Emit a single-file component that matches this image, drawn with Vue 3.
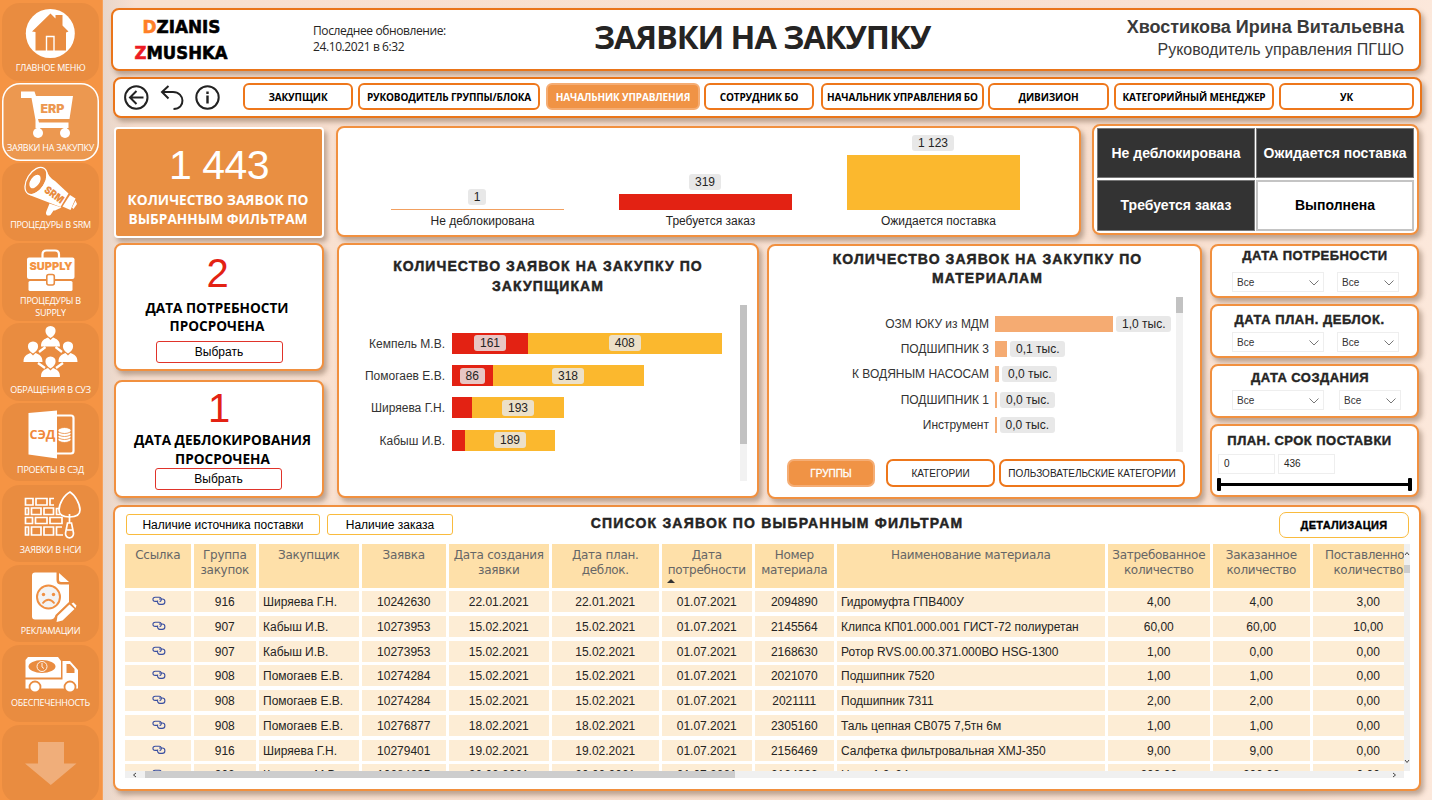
<script setup>
const menu = [
  { id: 'home', label: ['ГЛАВНОЕ МЕНЮ'], top: 3, h: 78, ly: 62 },
  { id: 'erp', label: ['ЗАЯВКИ НА ЗАКУПКУ'], top: 83, h: 78, ly: 142, active: true },
  { id: 'srm', label: ['ПРОЦЕДУРЫ В SRM'], top: 163, h: 78, ly: 219 },
  { id: 'supply', label: ['ПРОЦЕДУРЫ В', 'SUPPLY'], top: 243, h: 78, ly: 295 },
  { id: 'people', label: ['ОБРАЩЕНИЯ В СУЗ'], top: 323, h: 78, ly: 384 },
  { id: 'sed', label: ['ПРОЕКТЫ В СЭД'], top: 403, h: 78, ly: 464 },
  { id: 'nsi', label: ['ЗАЯВКИ В НСИ'], top: 485, h: 77, ly: 544 },
  { id: 'claims', label: ['РЕКЛАМАЦИИ'], top: 565, h: 77, ly: 625 },
  { id: 'truck', label: ['ОБЕСПЕЧЕННОСТЬ'], top: 645, h: 77, ly: 697 },
  { id: 'down', label: [], top: 725, h: 78, ly: 800 },
]

const tabs = [
  { t: 'ЗАКУПЩИК', w: 110, g: 0 },
  { t: 'РУКОВОДИТЕЛЬ ГРУППЫ/БЛОКА', w: 182, g: 5 },
  { t: 'НАЧАЛЬНИК УПРАВЛЕНИЯ', w: 154, g: 6, on: true },
  { t: 'СОТРУДНИК БО', w: 110, g: 4 },
  { t: 'НАЧАЛЬНИК УПРАВЛЕНИЯ БО', w: 163, g: 7 },
  { t: 'ДИВИЗИОН', w: 121, g: 4 },
  { t: 'КАТЕГОРИЙНЫЙ МЕНЕДЖЕР', w: 160, g: 5 },
  { t: 'УК', w: 135, g: 5 },
]

const statuses = [
  { t: 'Не деблокирована', v: '1', h: 1, c: '#f2a060' },
  { t: 'Требуется заказ', v: '319', h: 16, c: '#e32213' },
  { t: 'Ожидается поставка', v: '1 123', h: 55, c: '#fbb82e' },
]

const buyers = [
  { n: 'Кемпель М.В.', r: 76, y: 193.5, rv: '161', yv: '408' },
  { n: 'Помогаев Е.В.', r: 40.5, y: 151, rv: '86', yv: '318' },
  { n: 'Ширяева Г.Н.', r: 20, y: 92, rv: '', yv: '193' },
  { n: 'Кабыш И.В.', r: 13, y: 90, rv: '', yv: '189' },
]

const materials = [
  { n: 'ОЗМ ЮКУ из МДМ', w: 118, v: '1,0 тыс.' },
  { n: 'ПОДШИПНИК 3', w: 12, v: '0,1 тыс.' },
  { n: 'К ВОДЯНЫМ НАСОСАМ', w: 4, v: '0,0 тыс.' },
  { n: 'ПОДШИПНИК 1', w: 2, v: '0,0 тыс.' },
  { n: 'Инструмент', w: 1.5, v: '0,0 тыс.' },
]

const filters = [
  { t: 'ДАТА ПОТРЕБНОСТИ', cls: 'f1' },
  { t: 'ДАТА ПЛАН. ДЕБЛОК.', cls: 'f2' },
  { t: 'ДАТА СОЗДАНИЯ', cls: 'f3' },
]

const heads = ['Ссылка', 'Группа закупок', 'Закупщик', 'Заявка', 'Дата создания заявки', 'Дата план. деблок.', 'Дата потребности', 'Номер материала', 'Наименование материала', 'Затребованное количество', 'Заказанное количество', 'Поставленное количество']

const rows = [
  ['', '916', 'Ширяева Г.Н.', '10242630', '22.01.2021', '22.01.2021', '01.07.2021', '2094890', 'Гидромуфта ГПВ400У', '4,00', '4,00', '3,00'],
  ['', '907', 'Кабыш И.В.', '10273953', '15.02.2021', '15.02.2021', '01.07.2021', '2145564', 'Клипса КП01.000.001 ГИСТ-72 полиуретан', '60,00', '60,00', '10,00'],
  ['', '907', 'Кабыш И.В.', '10273953', '15.02.2021', '15.02.2021', '01.07.2021', '2168630', 'Ротор RVS.00.00.371.000ВО HSG-1300', '1,00', '0,00', '0,00'],
  ['', '908', 'Помогаев Е.В.', '10274284', '15.02.2021', '15.02.2021', '01.07.2021', '2021070', 'Подшипник 7520', '1,00', '1,00', '0,00'],
  ['', '908', 'Помогаев Е.В.', '10274284', '15.02.2021', '15.02.2021', '01.07.2021', '2021111', 'Подшипник 7311', '2,00', '2,00', '0,00'],
  ['', '908', 'Помогаев Е.В.', '10276877', '18.02.2021', '18.02.2021', '01.07.2021', '2305160', 'Таль цепная СВ075 7,5тн 6м', '1,00', '1,00', '0,00'],
  ['', '916', 'Ширяева Г.Н.', '10279401', '19.02.2021', '19.02.2021', '01.07.2021', '2156469', 'Салфетка фильтровальная XMJ-350', '9,00', '9,00', '0,00'],
  ['', '902', 'Кемпель М.В.', '10284895', '20.02.2021', '20.02.2021', '01.07.2021', '2124922', 'Цепь 1,2x24', '200,00', '200,00', '0,00'],
]
</script>

<template>
  <div class="app">
    <aside class="side">
      <div v-for="m in menu" :key="m.id" class="tile" :class="{ active: m.active }" :style="{ height: m.h + 'px', marginBottom: (m.id === 'sed' ? 4 : m.id === 'nsi' || m.id === 'claims' || m.id === 'truck' ? 3 : 2) + 'px' }">
        <svg width="97" :height="m.ly - m.top" :viewBox="`2 ${m.top} 97 ${m.ly - m.top}`">
          <g v-if="m.id === 'home'">
            <circle cx="50.3" cy="33.5" r="24.5" fill="#fff" />
            <path d="M32 31.500L50.500 13.500L55.500 18.500V15H62.500V25.500L68.500 31.500L66 32.500V50.500H35.500V32Z" fill="#e98c40" />
            <path d="M46.500 51V36.500H54V51" fill="none" stroke="#fff" stroke-width="1.400" />
          </g>
          <g v-else-if="m.id === 'erp'" fill="#fff">
            <path d="M21 91.500H34.500L36 96H73L69.500 119H38L39 122.500H68.500V128H35.500V120L31.500 98H21Z" />
            <rect x="37" y="128" width="3" height="3" /><rect x="64" y="128" width="3" height="3" />
            <circle cx="38" cy="133" r="5" /><circle cx="65" cy="133" r="5" />
            <text x="40.500" y="113" font-size="11.500" class="ic" textLength="24" lengthAdjust="spacingAndGlyphs" fill="#ec9850">ERP</text>
          </g>
          <g v-else-if="m.id === 'srm'" fill="#fff">
            <ellipse cx="36" cy="181" rx="9" ry="15" transform="rotate(32 36 181)" fill="none" stroke="#fff" stroke-width="1.300" />
            <ellipse cx="35" cy="181.500" rx="4.500" ry="7.500" transform="rotate(35 35 181.500)" />
            <path d="M46.500 169.500Q48 177 55 181L68.500 193.500L60.500 207L28 194.500Q40 194 46 180Z" />
            <path d="M70 195L75.500 198.500L70.500 210L62.500 206.500Z" />
            <path d="M75.500 200.500L77 204L73.500 209L72 207.500Z" />
            <path d="M49.500 203.500L61.500 207.500L55 210.500H53.500L50.500 215C47 216.500 45 214.500 46.500 211Z" />
            <text x="43.500" y="191.500" font-size="10.500" class="ic" textLength="21" lengthAdjust="spacingAndGlyphs" transform="rotate(36 43.500 191.500)" fill="#e98c40">SRM</text>
          </g>
          <g v-else-if="m.id === 'supply'" fill="#fff">
            <path d="M42.500 258V254.500Q42.500 250.500 46.500 250.500H55Q59 250.500 59 254.500V258" fill="none" stroke="#fff" stroke-width="2.200" />
            <rect x="27" y="257.500" width="47.500" height="21.500" rx="2" />
            <rect x="28.500" y="281" width="44" height="10" rx="1.500" />
            <rect x="46.800" y="274.500" width="7.500" height="10.500" rx="2" stroke="#e98c40" stroke-width="1.600" />
            <text x="29.500" y="270" font-size="10.500" class="ic" textLength="43" lengthAdjust="spacingAndGlyphs" fill="#f39444">SUPPLY</text>
          </g>
          <g v-else-if="m.id === 'people'" fill="#fff">
            <path d="M45.500 347L39 352M55.500 347L62 352M38 363L45 368M63 363L56 368" stroke="#fff" stroke-width="2.300" />
            <g v-for="p in [[50.500, 327], [33, 342.500], [68, 342.500], [50.500, 357.500]]" :key="p.join()" :transform="`translate(${p[0]} ${p[1]})`">
              <path d="M0 -1C7 -1 6.500 8 0 11C-6.500 8 -7 -1 0 -1Z" />
              <path d="M-9.500 19.500C-9.500 13 -6 12 -2.500 10.500L0 13L2.500 10.500C6 12 9.500 13 9.500 19.500Z" />
            </g>
          </g>
          <g v-else-if="m.id === 'sed'" fill="#fff">
            <path d="M57 415.500H71Q73.500 415.500 73.500 418V451Q73.500 453.500 71 453.500H57" fill="none" stroke="#fff" stroke-width="2.200" />
            <path d="M28.500 413L57 410.500V458.500L28.500 454.500Z" />
            <g stroke="#e98c40" stroke-width=".8">
              <ellipse cx="64.500" cy="439.500" rx="6.500" ry="3" /><ellipse cx="64.500" cy="436.500" rx="6.500" ry="3" /><ellipse cx="64.500" cy="433.500" rx="6.500" ry="3" /><ellipse cx="64.500" cy="430.500" rx="6.500" ry="3" />
            </g>
            <text x="29.500" y="438.500" font-size="12" class="sedt" textLength="26" lengthAdjust="spacingAndGlyphs" fill="#f0883a">СЭД</text>
          </g>
          <g v-else-if="m.id === 'nsi'" fill="none" stroke="#fff" stroke-width="1.700">
            <path d="M25.500 498.500H33V505H25.500ZM36 498.500H47V505H36ZM54 505H50V498.500H54M25.500 508H28.500V514.500H25.500ZM31.500 508H41V514.500H31.500ZM44 508H53.500V514.500H44ZM59 508.500H56.500V514.500H60M25.500 517.500H32.500V523.500H25.500ZM35.500 517.500H47V523.500H35.500ZM50 517.500H62V523.500H50ZM25.500 527H28.500V535H25.500ZM31.500 527H41V535H31.500ZM44 527H53.500V535H44ZM62 527H56.500V535H63" />
            <path d="M70 492C75 495 80 504 80 510C80 515 76 517 69.500 517C63 517 59 515 59 510C59 504 64 495 70 492Z" />
            <path d="M69.500 514V523M67.500 523H71.500L73.500 533C74 539.500 65 539.500 65.500 533ZM67 530H72" />
          </g>
          <g v-else-if="m.id === 'claims'" fill="#fff">
            <path d="M35 572.500H56.500V580Q56.500 584.500 61 584.500H69V602L55.500 615Q54.500 619.500 50 619.500H35Q32 619.500 32 616.500V575.500Q32 572.500 35 572.500Z" />
            <path d="M59 573L69 582H61Q59 582 59 580Z" />
            <circle cx="48.500" cy="597" r="11.500" fill="#f3f3f3" stroke="#f09043" stroke-width="2" />
            <path d="M42.500 603.500Q48.500 596 54.500 603.500" fill="none" stroke="#f09043" stroke-width="1.800" />
            <circle cx="43.500" cy="594.500" r="1.700" fill="#f09043" /><circle cx="53.500" cy="594.500" r="1.700" fill="#f09043" />
            <path d="M57.500 616L69.500 604.500L74.500 609L62.500 620.500L56.500 622ZM71.500 603.500L73.500 602.500L76.500 605.500L75.500 608Z" />
          </g>
          <g v-else-if="m.id === 'truck'" fill="#fff">
            <path d="M28 657H58L61 661V677.500H25.500V660Z" />
            <ellipse cx="42" cy="666.500" rx="13.500" ry="6.500" fill="#e98c40" />
            <circle cx="42" cy="666.500" r="5" fill="none" stroke="#fff" stroke-width=".9" />
            <path d="M42 663V667L44 668.500" fill="none" stroke="#fff" stroke-width=".9" />
            <path d="M62.500 661H70L78 670V688.500H25.500V679.500H62.500Z" />
            <path d="M66.500 664H70L74.500 669V673H66.500Z" fill="#e98c40" />
            <circle cx="35" cy="687" r="5.500" stroke="#e98c40" stroke-width="1.800" /><circle cx="70" cy="687" r="5.500" stroke="#e98c40" stroke-width="1.800" />
          </g>
          <path v-else d="M38 742H64V763.500H76.500L50.800 785L25 763.500H38Z" fill="#f0ae7a" />
        </svg>
        <div class="tlabel"><div v-for="l in m.label" :key="l">{{ l }}</div></div>
      </div>
    </aside>

    <main class="main">
      <header class="panel strong head">
        <svg class="logo" width="100" height="52" viewBox="0 0 100 52">
          <text x="10.500" y="17.500" textLength="78" lengthAdjust="spacingAndGlyphs" stroke="#000"><tspan fill="#ff7f27" stroke="#ff7f27">D</tspan>ZIANIS</text>
          <text x="2.500" y="43.500" textLength="93" lengthAdjust="spacingAndGlyphs" stroke="#000"><tspan fill="#ed1c24" stroke="#ed1c24">Z</tspan>MUSHKA</text>
        </svg>
        <div class="upd">Последнее обновление:<br />24.10.2021 в 6:32</div>
        <h1>ЗАЯВКИ НА ЗАКУПКУ</h1>
        <div class="user"><b>Хвостикова Ирина Витальевна</b><span>Руководитель управления ПГШО</span></div>
      </header>

      <nav class="panel strong nav">
        <svg class="navic" width="100" height="28" viewBox="122 83 100 28" fill="none" stroke="#222" stroke-width="2">
          <circle cx="136.300" cy="97.500" r="11.200" />
          <path d="M143.500 97.500H130M136.500 91L130 97.500L136.500 104" />
          <path d="M168.500 86L162 92L168.500 98.500M162 92H173C185 92 186 109 173.500 109" />
          <circle cx="207.500" cy="97.500" r="11.200" />
          <path d="M207.500 95.500V103.500M207.500 91.500V94" stroke-width="2.400" />
        </svg>
        <button v-for="b in tabs" :key="b.t" class="tab" :class="{ on: b.on }" :style="{ width: b.w + 'px', marginLeft: b.g + 'px' }">{{ b.t }}</button>
      </nav>

      <section class="row1">
        <div class="kpi"><div class="num">1 443</div><div class="cap">КОЛИЧЕСТВО ЗАЯВОК ПО<br />ВЫБРАННЫМ ФИЛЬТРАМ</div></div>
        <div class="panel status">
          <div v-for="s in statuses" :key="s.t" class="scol">
            <span class="pill">{{ s.v }}</span>
            <div class="sbar" :style="{ height: s.h + 'px', background: s.c }"></div>
            <div class="scat">{{ s.t }}</div>
          </div>
        </div>
        <div class="panel slicer">
          <div>Не деблокирована</div><div>Ожидается поставка</div><div>Требуется заказ</div><div class="white">Выполнена</div>
        </div>
      </section>

      <section class="row2">
        <div class="left">
          <div class="panel late l1"><div class="num">2</div><div class="cap">ДАТА ПОТРЕБНОСТИ<br />ПРОСРОЧЕНА</div><button>Выбрать</button></div>
          <div class="panel late l2"><div class="num">1</div><div class="cap">ДАТА ДЕБЛОКИРОВАНИЯ<br />ПРОСРОЧЕНА</div><button>Выбрать</button></div>
        </div>

        <div class="panel buyers">
          <h2>КОЛИЧЕСТВО ЗАЯВОК НА ЗАКУПКУ ПО<br />ЗАКУПЩИКАМ</h2>
          <div class="bbody">
            <div class="bars">
              <div v-for="b in buyers" :key="b.n" class="brow">
                <span class="bn">{{ b.n }}</span>
                <div class="seg red" :style="{ width: b.r + 'px' }"><i v-if="b.rv">{{ b.rv }}</i></div>
                <div class="seg yel" :style="{ width: b.y + 'px' }"><i>{{ b.yv }}</i></div>
              </div>
            </div>
            <div class="track"><div class="thumb"></div></div>
          </div>
        </div>

        <div class="panel mats">
          <h2>КОЛИЧЕСТВО ЗАЯВОК НА ЗАКУПКУ ПО<br />МАТЕРИАЛАМ</h2>
          <div class="mbody">
            <div class="bars">
              <div v-for="b in materials" :key="b.n" class="mrow">
                <span class="mn">{{ b.n }}</span>
                <div class="mbar" :style="{ width: b.w + 'px' }"></div>
                <span class="pill">{{ b.v }}</span>
              </div>
            </div>
            <div class="track"><div class="thumb"></div></div>
          </div>
          <div class="mbtns"><button class="on">ГРУППЫ</button><button>КАТЕГОРИИ</button><button>ПОЛЬЗОВАТЕЛЬСКИЕ КАТЕГОРИИ</button></div>
        </div>

        <div class="right">
          <div v-for="f in filters" :key="f.t" class="panel flt" :class="f.cls">
            <h3>{{ f.t }}</h3>
            <div class="sels">
              <div class="sel"><span>Все</span><svg width="10" height="6" viewBox="0 0 10 6"><path d="M.5 .5L5 5L9.500 .5" fill="none" stroke="#777" /></svg></div>
              <div class="sel sm"><span>Все</span><svg width="10" height="6" viewBox="0 0 10 6"><path d="M.5 .5L5 5L9.500 .5" fill="none" stroke="#777" /></svg></div>
            </div>
          </div>
          <div class="panel flt term">
            <h3>ПЛАН. СРОК ПОСТАВКИ</h3>
            <div class="ins"><span>0</span><span>436</span></div>
            <div class="slider"><b></b><i></i><b></b></div>
          </div>
        </div>
      </section>

      <section class="panel list">
        <div class="ltop">
          <button class="lb b1">Наличие источника поставки</button><button class="lb b2">Наличие заказа</button>
          <h2>СПИСОК ЗАЯВОК ПО ВЫБРАННЫМ ФИЛЬТРАМ</h2>
          <button class="det">ДЕТАЛИЗАЦИЯ</button>
        </div>
        <div class="twrap">
          <div class="grid">
            <div class="tr th">
              <div v-for="(h, i) in heads" :key="h"><span>{{ h }}</span><em v-if="i === 6"></em></div>
            </div>
            <div v-for="(r, k) in rows" :key="k" class="tr td">
              <div v-for="(c, i) in r" :key="i" :class="{ lt: i === 2 || i === 8 }">
                <svg v-if="i === 0" width="14" height="10" viewBox="0 0 14 10" fill="none" stroke="#3a4fa0" stroke-width="1.100"><path d="M5 5.400H3.200A2.100 1.900 0 0 1 3.200 1.300H6.500A2.300 2.200 0 0 1 7.600 5.600" /><path d="M7 3H10.200A2.700 2.700 0 0 1 10.200 8.400H8A2.600 2.600 0 0 1 5.800 4.600" /></svg>
                <template v-else>{{ c }}</template>
              </div>
            </div>
          </div>
          <div class="vs"><svg width="6" height="5" viewBox="0 0 6 5"><path d="M1 4L3 1.500L5 4" fill="none" stroke="#444" /></svg><div></div><svg width="6" height="5" viewBox="0 0 6 5"><path d="M1 1L3 3.500L5 1" fill="none" stroke="#444" /></svg></div>
        </div>
        <div class="hs"><svg width="5" height="6" viewBox="0 0 5 6"><path d="M4 1L1.500 3L4 5" fill="none" stroke="#444" /></svg><div></div><svg width="5" height="6" viewBox="0 0 5 6"><path d="M1 1L3.500 3L1 5" fill="none" stroke="#444" /></svg></div>
      </section>
    </main>
  </div>
</template>

<style>
body { overflow: hidden; }
</style>

<style scoped>
* { box-sizing: border-box; }
.app { display: flex; width: 1432px; height: 800px; overflow: hidden; font-family: "Liberation Sans", Arial, sans-serif; color: #252423; background: linear-gradient(90deg, #e8d6ca 103px, #f8e0d0 135px, #f9e1d1 1300px, #fce8db); }
h1, h2, h3 { margin: 0; }
button { font-family: inherit; padding: 0; background: #fff; color: #000; white-space: nowrap; }
.side { width: 103px; flex: none; height: 800px; overflow: hidden; background: #f59444; padding: 3px 0 0 2px; border-right: 1px solid #f7a25c; }
.tile { width: 97px; border-radius: 18px; background: #e98c40; overflow: hidden; }
.tile svg { display: block; }
.tile.active { background: #ec9850; box-shadow: inset 0 0 0 1.500px #fff; }
.tlabel { text-align: center; color: #fff; font: 9px/12px "Open Sans", "Noto Sans", sans-serif; letter-spacing: -.25px; white-space: nowrap; }
.ic { font-family: Inter, sans-serif; font-weight: 900; }
.sedt { font-family: "Open Sans", sans-serif; font-weight: 700; }
.main { width: 1329px; flex: none; }
.panel { background: #fff; border: 2px solid #f1903f; border-radius: 8px; box-shadow: 3px 4px 5px rgba(90, 60, 40, .38); }
.strong { border-color: #ea751a; }
.head { margin: 8px 0 0 8px; width: 1310px; height: 63px; display: flex; }
.logo { margin: 5px 0 0 19px; flex: none; font: 900 18px "DejaVu Sans", sans-serif; stroke-width: .6px; }
.upd { margin: 13px 0 0 81px; width: 200px; font-size: 12px; line-height: 16px; letter-spacing: -.4px; font-family: "Open Sans", sans-serif; }
h1 { margin-left: 81px; margin-top: 4px; font: 700 32.500px/46px "Open Sans", sans-serif; letter-spacing: -1.050px; white-space: nowrap; width: 340px; }
.user { margin-left: auto; padding: 6px 15px 0 0; text-align: right; display: flex; flex-direction: column; color: #3a3a3a; white-space: nowrap; }
.user b { font-size: 18px; line-height: 22px; }
.user span { font-size: 16px; line-height: 23px; }
.nav { margin: 6px 0 0 10px; width: 1309px; height: 41px; display: flex; padding-top: 4px; }
.navic { margin: 0 21px 0 7px; flex: none; }
.tab { height: 27px; border: 2px solid #ee771b; border-radius: 6px; font: 700 10px/24px "Open Sans", sans-serif; letter-spacing: -.15px; flex: none; }
.tab.on { background: #f09345; border-color: #f5ad74; color: #fff; }
.row1 { display: flex; height: 120px; }
.kpi { margin: 9px 0 0 11px; width: 210px; height: 111px; background: #e98f42; border: 2px solid #fff; border-radius: 4px; box-shadow: 3px 4px 5px rgba(90, 60, 40, .38); color: #fff; text-align: center; }
.kpi .num { font-size: 41px; line-height: 46px; margin-top: 13px; letter-spacing: -.5px; }
.kpi .cap { font: 700 13.700px/19px "Open Sans", sans-serif; margin: 2px 2px 0 0; white-space: nowrap; }
.status { margin: 8px 0 0 12px; width: 745px; height: 111px; display: flex; padding-left: 25px; }
.scol { width: 228px; display: flex; flex-direction: column; align-items: center; justify-content: flex-end; padding-bottom: 6px; }
.pill { background: #e8e8e8; border-radius: 3px; font-size: 12px; line-height: 16px; height: 16px; padding: 0 6px; white-space: nowrap; }
.scol .pill { margin-bottom: 4px; }
.sbar { width: 173px; flex: none; }
.scat { font-size: 12px; line-height: 16px; margin-top: 3px; padding-left: 11px; white-space: nowrap; }
.slicer { margin: 6px 0 0 11px; width: 327px; height: 111px; padding: 2px 3px; display: grid; grid-template-columns: 158px 158px; grid-template-rows: 50px 51px; gap: 2px 1px; }
.slicer div { background: #333; border: 1px solid #777; color: #fff; font-weight: 700; font-size: 14px; display: flex; align-items: center; justify-content: center; white-space: nowrap; padding-bottom: 1px; }
.slicer .white { background: #fff; color: #000; border: 2px solid #c4c4c4; }
.row2 { display: flex; height: 267px; }
.left { margin: 5px 0 0 11px; width: 210px; }
.late { text-align: center; display: flex; flex-direction: column; align-items: center; }
.late .num { color: #e32213; font-size: 40px; line-height: 46px; }
.late .cap { color: #000; font: 700 13.600px/18px "Open Sans", sans-serif; white-space: nowrap; }
.late button { width: 127px; height: 22px; border: 1px solid #e0332a; border-radius: 3px; font-size: 12px; line-height: 18px; }
.l1 { height: 128px; padding-top: 5px; }
.l1 .num { margin-left: -3px; }
.l1 .cap { margin: 3px 0 0 -4px; }
.l1 button { margin-top: 6px; }
.l2 { height: 118px; margin-top: 9px; padding-top: 3px; }
.l2 .cap { line-height: 19px; margin: -1px 0 0 7px; }
.l2 button { margin: 0 1px 0 0; }
h2 { font-weight: 700; font-size: 14px; text-align: center; letter-spacing: 1.080px; white-space: nowrap; -webkit-text-stroke: .45px #252423; }
.buyers { margin: 5px 0 0 13px; width: 422px; height: 255px; padding-top: 11px; }
.buyers h2 { line-height: 20px; }
.bbody, .mbody { display: flex; justify-content: space-between; }
.buyers .bbody { margin-top: 9px; padding-right: 10px; }
.buyers .bars { padding-top: 22px; }
.brow { display: flex; align-items: center; height: 32.400px; }
.bn { width: 106px; margin-right: 7px; text-align: right; font-size: 12px; line-height: 14px; padding-top: 1px; color: #333; white-space: nowrap; }
.seg { height: 21px; display: flex; align-items: center; justify-content: center; }
.seg i { font-style: normal; font-size: 12px; height: 16px; line-height: 16px; border-radius: 3px; padding: 0 6px; background: rgba(232, 232, 232, .83); }
.red { background: #e32213; } .yel { background: #fbb82e; }
.track { width: 7px; height: 176px; background: #f2f2f2; }
.thumb { width: 7px; height: 139px; background: #c2c2c2; }
.mats { margin: 6px 0 0 8px; width: 435px; height: 255px; padding-top: 4px; }
.mats h2 { line-height: 19px; padding-left: 6px; }
.mbody { margin-top: 9px; padding-right: 17px; height: 155px; }
.mbody .bars { padding-top: 14px; }
.mbody .track { height: 155px; }
.mbody .thumb { height: 16px; }
.mrow { display: flex; align-items: center; height: 25.300px; }
.mn { width: 220px; margin-right: 6px; text-align: right; font-size: 12px; color: #333; white-space: nowrap; }
.mbar { height: 16px; background: #f5ab72; }
.mrow .pill { margin-left: 3px; }
.mbtns { display: flex; margin-top: 7px; padding-left: 18px; }
.mbtns button { height: 28px; border: 2px solid #ee771b; border-radius: 7px; font-size: 10px; color: #222; width: 109px; margin-left: 11px; }
.mbtns .on { width: 88px; margin-left: 0; background: #f09345; border-color: #f5ad74; color: #fff; -webkit-text-stroke: .3px #fff; }
.mbtns button:last-child { width: 186px; margin-left: 4px; }
.right { margin: 6px 0 0 8px; width: 209px; }
.flt { height: 54px; margin-bottom: 6px; }
h3 { font-size: 13px; line-height: 16px; text-align: center; letter-spacing: .45px; white-space: nowrap; -webkit-text-stroke: .4px #252423; }
.f1 h3 { padding-top: 2px; padding-left: 1px; } .f2 h3 { padding-top: 6px; padding-right: 10px; letter-spacing: .55px; } .f3 h3 { padding-top: 4px; padding-right: 9px; }
.sels { display: flex; padding-left: 20px; }
.f1 .sels { margin-top: 8px; } .f2 .sels { margin-top: 4px; } .f3 .sels { margin-top: 4px; }
.sel { width: 92px; height: 20px; border: 1px solid #eee; display: flex; align-items: center; justify-content: space-between; padding: 0 4px; font-size: 10px; color: #333; }
.sel svg { margin-top: 2px; }
.sm { width: 62px; margin-left: 13px; }
.f3 .sm { margin-left: 15px; }
.term { height: 73px; margin: 0; }
.term h3 { padding-top: 7px; padding-right: 10px; }
.ins { display: flex; gap: 3px; margin: 5px 0 0 6px; }
.ins span { width: 57px; height: 20px; border: 1px solid #eee; font-size: 10px; line-height: 18px; padding-left: 5px; }
.slider { display: flex; align-items: center; margin: 4px 0 0 5px; width: 195px; }
.slider b { width: 4px; height: 13px; background: #000; border-radius: 1px; }
.slider i { flex: 1; height: 3px; background: #000; }
.list { margin-left: 10px; width: 1308px; height: 286px; padding: 5px 0 0 10px; }
.ltop { display: flex; height: 32px; }
.lb { height: 21px; margin-top: 2px; border: 1px solid #f9bb3e; border-radius: 3px; font-size: 12px; line-height: 18px; }
.b1 { width: 194px; margin-left: 1px; } .b2 { width: 126px; margin-left: 7px; }
.ltop h2 { margin-left: 137px; font-size: 14px; line-height: 23px; width: 374px; letter-spacing: 1.200px; }
.det { width: 130px; height: 26px; margin-left: auto; margin-right: 10px; border: 1.500px solid #f9bb3e; border-radius: 7px; font-weight: 700; font-size: 11px; letter-spacing: .3px; -webkit-text-stroke: .35px #000; }
.twrap { display: flex; width: 1285px; height: 227px; }
.grid { width: 1279px; height: 227px; overflow: hidden; }
.tr { display: grid; grid-template-columns: 69px 65px 103px 87px 103px 110px 93px 82px 271px 105px 100px 114px; width: 1302px; }
.tr > div { margin-right: 3.500px; position: relative; }
.th { font: 12px/15px "DejaVu Sans", sans-serif; color: #666; text-align: center; margin-bottom: 3px; letter-spacing: -.28px; }
.th > div { height: 44px; padding-top: 4px; background: #fee0a9; }
.th em { position: absolute; left: 5px; bottom: 5px; border: 4px solid transparent; border-top: 0; border-bottom-color: #333; }
.td { height: 24.750px; font-size: 12px; }
.td > div { height: 21px; line-height: 23px; background: #fdedd5; text-align: center; white-space: nowrap; }
.td > div.lt { text-align: left; padding-left: 4px; }
.td svg { display: block; margin: 5px auto 0; }
.td > div:first-child { padding: .01px 0 0 2px; }
.vs { width: 6px; background: #f0f0f0; display: flex; flex-direction: column; justify-content: space-between; padding: 7px 0; }
.vs div { height: 8px; background: #cdcdcd; margin: 9px 0 auto; }
.hs { width: 1279px; height: 7px; background: #f0f0f0; display: flex; align-items: center; padding: 0 7px; }
.hs div { width: 590px; height: 7px; background: #cdcdcd; margin: 0 auto 0 8px; }
</style>
